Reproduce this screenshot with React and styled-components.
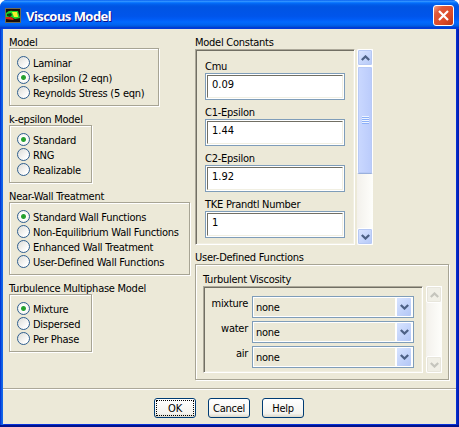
import React from "react";
import styled, { createGlobalStyle, css } from "styled-components";

const modelGroups = [
  {
    title: "Model",
    width: 150,
    selected: 1,
    options: ["Laminar", "k-epsilon (2 eqn)", "Reynolds Stress (5 eqn)"],
  },
  {
    title: "k-epsilon Model",
    width: 83,
    selected: 0,
    options: ["Standard", "RNG", "Realizable"],
  },
  {
    title: "Near-Wall Treatment",
    width: 181,
    selected: 0,
    options: [
      "Standard Wall Functions",
      "Non-Equilibrium Wall Functions",
      "Enhanced Wall Treatment",
      "User-Defined Wall Functions",
    ],
  },
  {
    title: "Turbulence Multiphase Model",
    width: 83,
    selected: 0,
    options: ["Mixture", "Dispersed", "Per Phase"],
  },
];

const constants = [
  { label: "Cmu", value: "0.09" },
  { label: "C1-Epsilon", value: "1.44" },
  { label: "C2-Epsilon", value: "1.92" },
  { label: "TKE Prandtl Number", value: "1" },
];

const phases = ["mixture", "water", "air"];

function Chevron({ up, color = "#4d6185" }) {
  return (
    <svg width="9" height="6" viewBox="0 0 9 6">
      <path
        d={up ? "M0.8 5 L4.5 1.5 L8.2 5" : "M0.8 1 L4.5 4.5 L8.2 1"}
        fill="none"
        stroke={color}
        strokeWidth="2.3"
      />
    </svg>
  );
}

function AppIcon() {
  return (
    <svg width="16" height="15" viewBox="0 0 16 15">
      <rect width="16" height="15" fill="#6f6a50" />
      <rect x="1" y="1" width="14" height="13" fill="#1a0d08" />
      <path d="M1 5 Q4 2 8 3 L13 3 L15 10 L10 11 L6 9 L1 9z" fill="#19d42b" />
      <path d="M1 9 L6 9 L9 11 L8 12 L1 11z" fill="#d92a12" />
      <path d="M7 4 L12 4 L13 9 L9 9z" fill="#f4ee2d" />
      <path d="M2 6 L6 5 L7 7 L5 9 L2 8z" fill="#0b3b12" />
    </svg>
  );
}

function ScrollBar({ disabled }) {
  const color = disabled ? "#c5c5bd" : undefined;
  return (
    <Track>
      <ScrollButton $disabled={disabled}>
        <Chevron up color={color} />
      </ScrollButton>
      {!disabled && (
        <Thumb>
          <Grip />
        </Thumb>
      )}
      <Spacer />
      <ScrollButton $disabled={disabled}>
        <Chevron color={color} />
      </ScrollButton>
    </Track>
  );
}

function RadioGroup({ group }) {
  return (
    <section>
      <GroupTitle>{group.title}</GroupTitle>
      <RadioBox $width={group.width}>
        {group.options.map((option, index) => (
          <RadioRow key={option}>
            <Radio $checked={index === group.selected} />
            <RadioText>{option}</RadioText>
          </RadioRow>
        ))}
      </RadioBox>
    </section>
  );
}

function App() {
  return (
    <>
      <GlobalStyle />
      <Window>
        <TitleBar>
          <AppIcon />
          <Title>Viscous Model</Title>
          <CloseButton aria-label="Close">
            <svg width="11" height="11" viewBox="0 0 11 11">
              <path d="M1 1 L10 10 M10 1 L1 10" stroke="#fff" strokeWidth="2.2" />
            </svg>
          </CloseButton>
        </TitleBar>

        <Content>
          <LeftColumn>
            {modelGroups.map((group) => (
              <RadioGroup key={group.title} group={group} />
            ))}
          </LeftColumn>

          <RightColumn>
            <GroupTitle $height={20}>Model Constants</GroupTitle>
            <ScrollArea $height={196}>
              <ConstantsPanel>
                {constants.map(({ label, value }) => (
                  <Field key={label}>
                    <FieldLabel>{label}</FieldLabel>
                    <InputFrame>
                      <Input defaultValue={value} aria-label={label} />
                    </InputFrame>
                  </Field>
                ))}
              </ConstantsPanel>
              <ScrollBar />
            </ScrollArea>

            <GroupTitle $top={6}>User-Defined Functions</GroupTitle>
            <FunctionsBox>
              <InnerTitle>Turbulent Viscosity</InnerTitle>
              <ScrollArea $height={87}>
                <PhasePanel>
                  {phases.map((phase) => (
                    <PhaseRow key={phase}>
                      <PhaseLabel>{phase}</PhaseLabel>
                      <Select>
                        <SelectValue>none</SelectValue>
                        <SelectArrow>
                          <Chevron />
                        </SelectArrow>
                      </Select>
                    </PhaseRow>
                  ))}
                </PhasePanel>
                <ScrollBar disabled />
              </ScrollArea>
            </FunctionsBox>
          </RightColumn>
        </Content>

        <Footer>
          <Button $focused>
            <span>OK</span>
          </Button>
          <Button>
            <span>Cancel</span>
          </Button>
          <Button>
            <span>Help</span>
          </Button>
        </Footer>
      </Window>
    </>
  );
}

export default App;

const GlobalStyle = createGlobalStyle`
  * {
    box-sizing: border-box;
  }
  body {
    margin: 0;
    background: #fff;
    color: #000;
    font-family: "DejaVu Sans Condensed", "DejaVu Sans", sans-serif;
    font-stretch: condensed;
    font-size: 11px;
    line-height: 13px;
    letter-spacing: -0.26px;
  }
  svg {
    display: block;
    flex: none;
  }
`;

const sunken = css`
  border: 1px solid;
  border-color: #aca899 #fff #fff #aca899;
  box-shadow: inset 1px 1px #716f64, inset -1px -1px #f1efe2;
`;

const etched = css`
  border: 1px solid #a7a494;
  box-shadow: inset 1px 1px #fff, 1px 1px #fff;
`;

const Window = styled.div`
  width: 459px;
  height: 427px;
  display: flex;
  flex-direction: column;
  padding: 0 3px 3px;
  overflow: hidden;
  border-radius: 7px 7px 0 0;
  background: linear-gradient(90deg, #0019cf 0, #0855dd 1px, #166aee 3px, #0831d9 4px, #0831d9 456px, #0019a5 459px);
  box-shadow: inset 0 -2px #00138c;
`;

const TitleBar = styled.header`
  height: 29px;
  flex: none;
  display: flex;
  align-items: center;
  margin: 0 -3px;
  padding: 1px 5px 0;
  background: linear-gradient(
    #0058ee 0,
    #3593ff 4%,
    #288eff 6%,
    #127dff 8%,
    #036ffc 10%,
    #0262ee 14%,
    #0057e5 20%,
    #0054e3 24%,
    #0055eb 56%,
    #005bf5 66%,
    #026afe 76%,
    #0062ef 86%,
    #0052d6 92%,
    #003dd7 94%,
    #003dd7 100%
  );
`;

const Title = styled.h1`
  flex: 1;
  margin: 1px 0 0 5px;
  color: #fff;
  font: bold 13px/18px "Noto Sans", sans-serif;
  letter-spacing: -0.55px;
  text-shadow: 1px 1px #0f1089;
`;

const CloseButton = styled.button`
  width: 21px;
  height: 21px;
  display: grid;
  place-items: center;
  padding: 0;
  border: 1px solid #fff;
  border-radius: 3px;
  background: linear-gradient(135deg, #f0a088 0, #e0593a 25%, #dc4a28 65%, #b93516 100%);
`;

const Content = styled.main`
  height: 359px;
  flex: none;
  display: flex;
  background: #ece9d8;
`;

const LeftColumn = styled.div`
  width: 192px;
  padding-left: 6px;
`;

const RightColumn = styled.div`
  width: 254px;
`;

const GroupTitle = styled.h2`
  height: ${({ $height = 19 }) => $height}px;
  margin: 0;
  padding-top: ${({ $top = 7 }) => $top}px;
  font: inherit;
  line-height: 13px;
  white-space: nowrap;
`;

const RadioBox = styled.div`
  ${etched}
  width: ${({ $width }) => $width}px;
  padding: 6px 0 5px 7px;
`;

const RadioRow = styled.label`
  height: 15px;
  display: flex;
  align-items: center;
  gap: 3px;
  white-space: nowrap;
`;

const Radio = styled.span`
  width: 13px;
  height: 13px;
  flex: none;
  border: 1px solid #2f5f8f;
  border-radius: 50%;
  background: ${({ $checked }) =>
    $checked
      ? "radial-gradient(circle, #21a121 0, #2ca33a 2px, #fff 3px, #f4f4f0 5px)"
      : "linear-gradient(135deg, #dcdcd7, #fff 80%)"};
`;

const RadioText = styled.span`
  padding-top: 2px;
`;

const ScrollArea = styled.div`
  height: ${({ $height }) => $height}px;
  display: flex;
`;

const ConstantsPanel = styled.div`
  ${sunken}
  width: 160px;
  margin-right: 2px;
  padding: 9px 0 0 9px;
`;

const Field = styled.div`
  height: 46px;
`;

const FieldLabel = styled.div`
  height: 14px;
  padding-top: 1px;
  white-space: nowrap;
`;

const InputFrame = styled.div`
  width: 140px;
  height: 27px;
  padding: 1px;
  border: 1px solid #7f9db9;
  background: #fff;
`;

const Input = styled.input`
  display: block;
  width: 136px;
  height: 23px;
  padding: 1px 4px 6px;
  border: 1px solid;
  border-color: #716f64 #f1efe2 #f1efe2 #716f64;
  outline: none;
  background: #fff;
  color: #000;
  font: inherit;
  letter-spacing: 0;
`;

const Track = styled.div`
  width: 16px;
  display: flex;
  flex-direction: column;
  background: linear-gradient(90deg, #f3f1ec, #fefefb);
`;

const ScrollButton = styled.div`
  height: 17px;
  flex: none;
  display: grid;
  place-items: center;
  border: 1px solid #fff;
  border-radius: 2px;
  box-shadow: inset 0 0 0 1px ${({ $disabled }) => ($disabled ? "#e8e6dc" : "#b6c8f4")};
  background: ${({ $disabled }) =>
    $disabled ? "#f0efe6" : "linear-gradient(135deg, #dce6ff, #b4c8f8)"};
`;

const Thumb = styled.div`
  height: 108px;
  display: grid;
  place-items: center;
  border: 1px solid #fff;
  border-bottom-color: #9ab0dc;
  border-radius: 2px;
  box-shadow: inset 0 0 0 1px #b8caf6;
  background: linear-gradient(90deg, #cad8ff, #bacbfb);
`;

const Grip = styled.div`
  width: 7px;
  height: 8px;
  background: repeating-linear-gradient(#eef4fe 0 1px, #8cb0f8 1px 2px);
`;

const Spacer = styled.div`
  flex: 1;
`;

const FunctionsBox = styled.div`
  ${etched}
  height: 116px;
  padding-left: 7px;
`;

const InnerTitle = styled.h3`
  height: 21px;
  margin: 0;
  padding-top: 8px;
  font: inherit;
`;

const PhasePanel = styled.div`
  ${sunken}
  width: 220px;
  margin-right: 3px;
  padding-top: 9px;
`;

const PhaseRow = styled.div`
  height: 25px;
  display: flex;
`;

const PhaseLabel = styled.div`
  width: 44px;
  margin-right: 4px;
  padding-top: 1px;
  text-align: right;
`;

const Select = styled.div`
  width: 162px;
  height: 22px;
  display: flex;
  align-items: center;
  justify-content: space-between;
  padding: 0 1px 0 3px;
  border: 1px solid #7f9db9;
  box-shadow: inset 0 0 0 1px #fff;
`;

const SelectValue = styled.span`
  padding-top: 1px;
`;

const SelectArrow = styled.span`
  width: 17px;
  height: 20px;
  display: grid;
  place-items: center;
  border: 1px solid #fff;
  border-left-width: 2px;
  border-radius: 2px;
  background: linear-gradient(135deg, #d8e4ff, #b2c6f6);
`;

const Footer = styled.footer`
  height: 36px;
  flex: none;
  display: flex;
  gap: 12px;
  padding: 9px 0 0 151px;
  border-top: 1px solid #aca899;
  box-shadow: inset 0 1px #fff;
  background: #ece9d8;
`;

const Button = styled.button`
  width: 42px;
  height: 20px;
  display: flex;
  padding: 1px;
  border: 1px solid #003c74;
  border-radius: 3px;
  background: linear-gradient(#fff, #f4f3ee 80%, #dcd8ca);
  color: #000;
  font: inherit;
  letter-spacing: inherit;

  span {
    flex: 1;
    height: 16px;
    border: 1px ${({ $focused }) => ($focused ? "dotted #000" : "solid transparent")};
    line-height: 15px;
    text-align: center;
    white-space: nowrap;
  }
`;
